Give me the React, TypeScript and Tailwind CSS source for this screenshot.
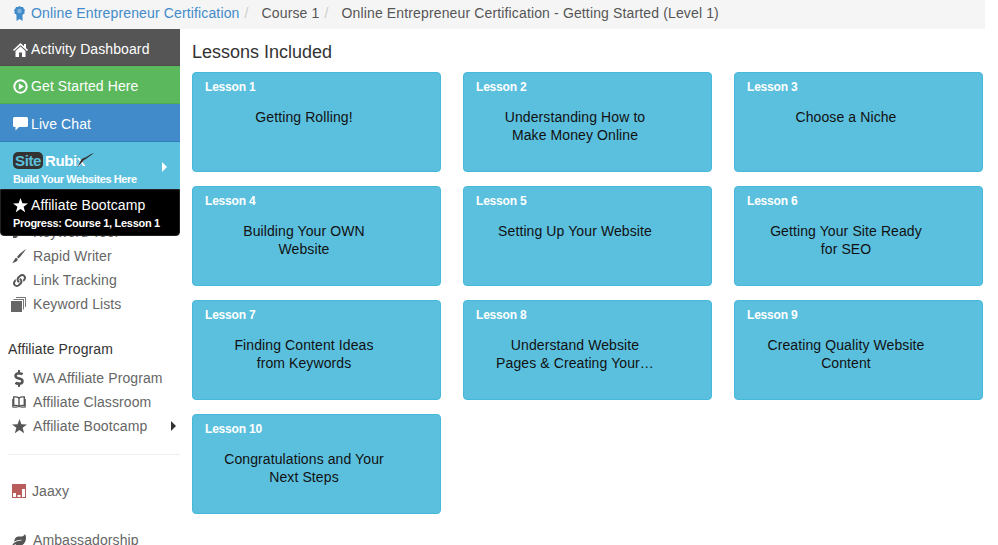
import React from 'react';
import { FaDollarSign, FaKey, FaLeaf, FaLink } from 'react-icons/fa';

const lessons = [
  ['Getting Rolling!'],
  ['Understanding How to', 'Make Money Online'],
  ['Choose a Niche'],
  ['Building Your OWN', 'Website'],
  ['Setting Up Your Website'],
  ['Getting Your Site Ready', 'for SEO'],
  ['Finding Content Ideas', 'from Keywords'],
  ['Understand Website', 'Pages & Creating Your…'],
  ['Creating Quality Website', 'Content'],
  ['Congratulations and Your', 'Next Steps'],
];

const STAR = '7.5,0 9.4,5.2 15,5.4 10.6,8.8 12.2,14.2 7.5,11.1 2.8,14.2 4.4,8.8 0,5.4 5.6,5.2';

const StarIcon = ({ color }: { color: string }) => (
  <svg className="shrink-0" width="15" height="15" viewBox="0 0 15 15">
    <polygon points={STAR} fill={color} />
  </svg>
);

const RosetteIcon = () => (
  <svg className="shrink-0" width="11" height="15" viewBox="0 0 11 15">
    <path d="M2.5 8 L2.5 15 L5.5 13 L8.5 15 L8.5 8Z" fill="#428bca" />
    <path d="M5.5 0 L7 1 L9 1 L9.6 2.6 L11 4 L10.4 5.6 L10.6 7.4 L9 8.2 L7.8 9.6 L5.5 9.4 L3.2 9.6 L2 8.2 L.4 7.4 L.6 5.6 L0 4 L1.4 2.6 L2 1 L4 1Z" fill="#428bca" />
    <circle cx="5.5" cy="5" r="2.2" fill="#7fb2df" />
  </svg>
);

const HomeIcon = () => (
  <svg className="shrink-0" width="15" height="14" viewBox="0 0 15 14" fill="#fff">
    <path d="M7.5 0 L11 3.2 L11 1 L13 1 L13 5 L15 7 L14 8 L7.5 2.2 L1 8 L0 7Z" />
    <path d="M2.5 8 L7.5 3.6 L12.5 8 L12.5 14 L9 14 L9 9.5 L6 9.5 L6 14 L2.5 14Z" />
  </svg>
);

const PlayIcon = () => (
  <svg className="shrink-0" width="15" height="15" viewBox="0 0 15 15">
    <circle cx="7.5" cy="7.5" r="6.2" fill="none" stroke="#fff" strokeWidth="2" />
    <polygon points="5.8,4.3 11,7.5 5.8,10.7" fill="#fff" />
  </svg>
);

const ChatIcon = () => (
  <svg className="shrink-0" width="15" height="14" viewBox="0 0 15 14" fill="#fff">
    <path d="M1.5 0 H13.5 Q15 0 15 1.5 V8.5 Q15 10 13.5 10 H6 L2.5 13.5 V10 H1.5 Q0 10 0 8.5 V1.5 Q0 0 1.5 0Z" />
  </svg>
);

const BrushIcon = () => (
  <svg width="14" height="14" viewBox="0 0 14 14" fill="#555">
    <path d="M14 0 C11 2 7 5 5 8 L6.5 9.5 C9 7 12 3 14 0Z" />
    <path d="M4.3 8.7 C2.5 9.2 2.6 11.5 0 14 C3 13.5 5.6 12.5 5.8 10.2Z" />
  </svg>
);

const BookIcon = () => (
  <svg width="14" height="13" viewBox="0 0 14 13" fill="none" stroke="#555" strokeWidth="1.4">
    <path d="M7 2 C5.5 .8 3.5 .7 1.7 1 V9.6 C3.5 9.3 5.5 9.4 7 10.6 C8.5 9.4 10.5 9.3 12.3 9.6 V1 C10.5 .7 8.5 .8 7 2Z" />
    <path d="M7 2 V10.6" />
    <path d="M.7 3 V11.2 H5.5 M13.3 3 V11.2 H8.5" strokeWidth="1" />
  </svg>
);

const StackIcon = () => (
  <svg className="-ml-[1px] shrink-0" width="15" height="15" viewBox="0 0 15 15">
    <path d="M5 0 H15 V10 H14 V1 H5Z" fill="#777" />
    <path d="M2.5 2 H13 V12.5 H12 V3 H2.5Z" fill="#777" />
    <rect x="0" y="4" width="11" height="11" fill="#666" />
  </svg>
);

const JaaxyIcon = () => (
  <svg className="shrink-0" width="14" height="14" viewBox="0 0 14 14">
    <rect width="14" height="14" fill="#b85c5c" />
    <rect x="1" y="9" width="3" height="4" fill="#fff" />
    <rect x="5.5" y="11" width="3" height="2" fill="#fff" />
    <rect x="10" y="5" width="3" height="8" fill="#fff" />
  </svg>
);

const NavItem = ({ icon, label, arrow }: { icon: React.ReactNode; label: string; arrow?: boolean }) => (
  <div className="flex h-6 items-center text-[#666]">
    <span className="flex w-[33px] shrink-0 items-center justify-center pl-[12px] pr-[7px] text-[#555]">{icon}</span>
    <span>{label}</span>
    {arrow && <span className="ml-auto mr-[4px] h-0 w-0 border-y-[5px] border-l-[5px] border-y-transparent border-l-[#333]" />}
  </div>
);

const SideButton = ({ icon, label, className }: { icon: React.ReactNode; label: string; className: string }) => (
  <div className={`flex items-center gap-[3px] border-b pl-[13px] text-white ${className}`}>
    {icon}
    <span>{label}</span>
  </div>
);

export default function App() {
  return (
    <div className="h-[545px] w-[998px] overflow-hidden bg-white font-['Liberation_Sans',Arial,sans-serif] text-[14px] tracking-[0.1px] text-[#333]">
      <div className="flex h-[29px] w-[985px] items-center bg-[#f5f5f5] pb-[2px] pl-[14px] tracking-[0.14px]">
        <span className="mr-[6px]"><RosetteIcon /></span>
        <span className="text-[#428bca]">Online Entrepreneur Certification</span>
        <span className="ml-[5px] mr-[13px] text-[#ccc]">/</span>
        <span className="text-[#555]">Course 1</span>
        <span className="ml-[5px] mr-[13px] text-[#ccc]">/</span>
        <span className="text-[#555]">Online Entrepreneur Certification - Getting Started (Level 1)</span>
      </div>

      <div className="flex w-[985px]">
        <aside className="w-[180px] shrink-0">
          <div className="relative z-10 -mb-[16px] flex flex-col">
            <SideButton icon={<HomeIcon />} label="Activity Dashboard" className="h-[37px] border-[#4d4d4d] bg-[#555] pt-[5px]" />
            <SideButton icon={<PlayIcon />} label="Get Started Here" className="h-[38px] border-[#4cae4c] bg-[#5cb85c] pt-[3px]" />
            <SideButton icon={<ChatIcon />} label="Live Chat" className="h-[38px] border-[#357ebd] bg-[#428bca] pt-[3px]" />
            <div className="relative h-[47px] bg-[#5bc0de] pl-[13px] pt-[9px] text-white">
              <div className="flex h-[18px] items-center text-[15px] font-bold leading-none tracking-[-0.4px]">
                <span className="flex h-[17px] w-[30px] items-center justify-center rounded-[5px] bg-[#333] text-[#5bc0de]">Site</span>
                <span className="ml-[2px]">Rubix</span>
                <svg className="-ml-[9px]" width="18" height="14" viewBox="0 0 18 14">
                  <path d="M1 14 C4 10 5 5 8 5 C11 4 14 1 18 0 C14 3 10 6 8 7 C6 9 4 12 1 14Z" fill="#333" />
                </svg>
              </div>
              <div className="mt-[3px] text-[11px] font-bold leading-[14px] tracking-[-0.4px]">Build Your Websites Here</div>
              <span className="absolute left-[162px] top-[20px] h-0 w-0 border-y-[5px] border-l-[5px] border-y-transparent border-l-white" />
            </div>
            <div className="h-[47px] rounded-b-[4px] border border-[#222] bg-black pl-[12px] pt-[5px] text-white">
              <div className="flex items-center gap-[3px] leading-5">
                <StarIcon color="#fff" />
                <span>Affiliate Bootcamp</span>
              </div>
              <div className="mt-[1px] text-[11px] font-bold leading-[15px] tracking-[-0.3px]">Progress: Course 1, Lesson 1</div>
            </div>
          </div>

          <NavItem icon={<FaKey size={12} />} label="Keyword Tool" />
          <NavItem icon={<BrushIcon />} label="Rapid Writer" />
          <NavItem icon={<FaLink size={13} />} label="Link Tracking" />
          <NavItem icon={<StackIcon />} label="Keyword Lists" />

          <div className="mb-[5px] mt-[21px] h-6 pl-2 leading-6 text-[#333]">Affiliate Program</div>
          <NavItem icon={<FaDollarSign size={17} />} label="WA Affiliate Program" />
          <NavItem icon={<BookIcon />} label="Affiliate Classroom" />
          <NavItem icon={<StarIcon color="#555" />} label="Affiliate Bootcamp" arrow />

          <div className="ml-2 mt-4 border-t border-[#eee]" />
          <div className="mt-6 flex h-6 items-center text-[#666]">
            <span className="flex w-[32px] shrink-0 pl-[12px]"><JaaxyIcon /></span>
            <span>Jaaxy</span>
          </div>
          <div className="mt-[25px]">
            <NavItem icon={<FaLeaf size={15} />} label="Ambassadorship" />
          </div>
        </aside>

        <main className="ml-3 flex-1">
          <h2 className="mb-[10px] mt-[13px] text-[18px] leading-5 tracking-normal text-[#333]">Lessons Included</h2>
          <div className="grid w-[791px] grid-cols-[249px_249px_249px] gap-x-[22px] gap-y-[14px]">
            {lessons.map((lines, i) => (
              <div key={i} className="h-[100px] rounded-[4px] border border-[#46b8da] bg-[#5bc0de] pl-[12px] pr-[37px] pt-[6px]">
                <div className="text-[12px] font-bold leading-4 tracking-[-0.2px] text-white">Lesson {i + 1}</div>
                <div className="mt-[13px] text-center leading-[18px] text-[#111]">
                  {lines.map((line) => (
                    <div key={line}>{line}</div>
                  ))}
                </div>
              </div>
            ))}
          </div>
        </main>
      </div>
    </div>
  );
}
